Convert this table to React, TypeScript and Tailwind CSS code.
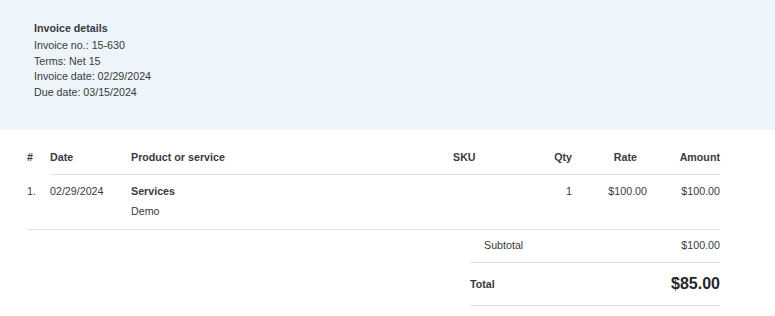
import React from "react";

const details = ["Invoice no.: 15-630", "Terms: Net 15", "Invoice date: 02/29/2024", "Due date: 03/15/2024"];

const items = [
  { n: "1.", date: "02/29/2024", product: "Services", desc: "Demo", sku: "", qty: "1", rate: "$100.00", amount: "$100.00" },
];

export default function App() {
  return (
    <div className="w-[775px] h-[316px] bg-white text-[10.7px] text-[#393a3d] font-['Liberation_Sans',Arial,sans-serif]">
      <div className="h-[130px] bg-[#edf4fa] pl-[34px] pt-[20px]">
        <div className="font-bold leading-4 mb-[2px]">Invoice details</div>
        {details.map((d, i) => (
          <div key={i} className="leading-[15.7px]">{d}</div>
        ))}
      </div>

      <div className="pl-[27px] w-[720px]">
        <div className="flex font-bold leading-4">
          <div className="w-[23px] pt-[19px]">#</div>
          <div className="flex flex-1 pt-[19px] pb-[9px] border-b border-[#e1e3e6]">
            <div className="w-[81px]">Date</div>
            <div className="w-[322px]">Product or service</div>
            <div className="w-[80px]">SKU</div>
            <div className="w-[39px] text-right">Qty</div>
            <div className="w-[75px] text-right pr-[10px]">Rate</div>
            <div className="w-[73px] text-right">Amount</div>
          </div>
        </div>

        {items.map((it, i) => (
          <div key={i} className="flex leading-4 pt-[8px] pb-[10px] border-b border-[#e1e3e6]">
            <div className="w-[23px] text-[#34425a]">{it.n}</div>
            <div className="w-[81px]">{it.date}</div>
            <div className="w-[322px] flex flex-col gap-[4px]">
              <span className="font-bold">{it.product}</span>
              <span>{it.desc}</span>
            </div>
            <div className="w-[80px]">{it.sku}</div>
            <div className="w-[39px] text-right">{it.qty}</div>
            <div className="w-[75px] text-right text-[#363d4a]">{it.rate}</div>
            <div className="w-[73px] text-right">{it.amount}</div>
          </div>
        ))}

        <div className="ml-auto w-[250px]">
          <div className="flex justify-between leading-4 pt-[7px] pb-[9px] border-b border-[#e1e3e6]">
            <span className="pl-[14px]">Subtotal</span>
            <span>$100.00</span>
          </div>
          <div className="flex justify-between items-center h-[43px] border-b border-[#e1e3e6]">
            <span className="font-bold">Total</span>
            <span className="font-bold text-[16px] text-[#26272a]">$85.00</span>
          </div>
        </div>
      </div>
    </div>
  );
}
